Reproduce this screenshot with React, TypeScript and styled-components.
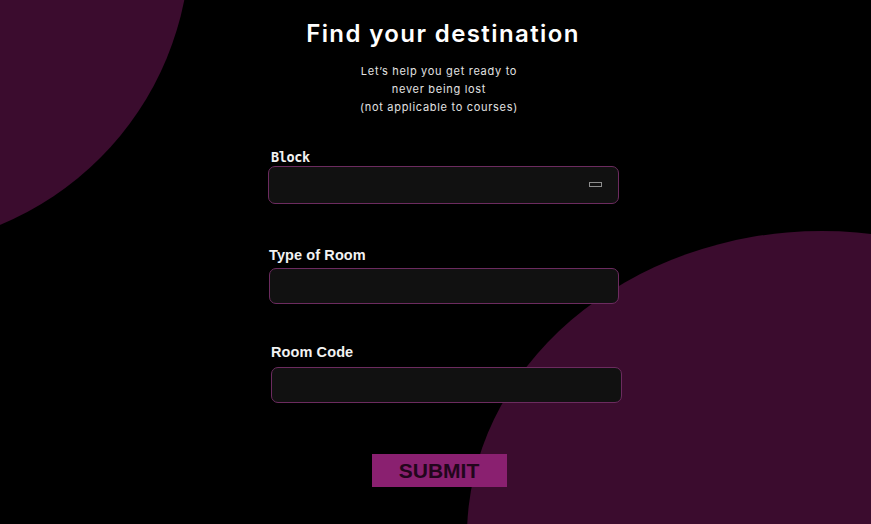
import React from "react";
import styled, { createGlobalStyle } from "styled-components";

const GlobalStyle = createGlobalStyle`
  html, body { margin: 0; padding: 0; background: #000; }
  body { font-family: "Inter", "Liberation Sans", sans-serif; }
  * { box-sizing: border-box; }
`;

const Page = styled.div`
  position: relative;
  width: 871px;
  height: 524px;
  overflow: hidden;
  background: #000;
`;

const Blob = styled.div<{ $left: number; $top: number; $w: number; $h: number }>`
  position: absolute;
  left: ${(p) => p.$left}px;
  top: ${(p) => p.$top}px;
  width: ${(p) => p.$w}px;
  height: ${(p) => p.$h}px;
  border-radius: 50%;
  background: #3b0c2e;
`;

const Main = styled.main`
  position: relative;
  z-index: 1;
  display: flex;
  flex-direction: column;
  align-items: center;
  padding-top: 18px;
  padding-left: 15px;
`;

const Title = styled.h1`
  margin: 0;
  font-family: "Inter", "Liberation Sans", sans-serif;
  font-weight: 600;
  font-size: 24px;
  line-height: 30px;
  letter-spacing: 1.4px;
  color: #fff;
  transform: translateY(1px);
`;

const Subtitle = styled.p`
  margin: 14px 0 0;
  font-family: "Inter", "Liberation Sans", sans-serif;
  font-size: 11px;
  line-height: 18px;
  letter-spacing: 0.7px;
  color: #e2e2e2;
  text-align: center;
  transform: translateX(-4px);
`;

const Form = styled.form`
  display: flex;
  flex-direction: column;
  align-items: flex-start;
  width: 352px;
  margin-top: 33px;
`;

const Field = styled.div<{ $dx: number; $top: number }>`
  display: flex;
  flex-direction: column;
  margin-left: ${(p) => p.$dx}px;
  margin-top: ${(p) => p.$top}px;
`;

const Label = styled.label<{ $mono?: boolean; $indent: number; $gap: number }>`
  display: block;
  margin: 0 0 ${(p) => p.$gap}px ${(p) => p.$indent}px;
  font-family: ${(p) =>
    p.$mono ? '"DejaVu Sans Mono", "Liberation Mono", monospace' : '"Liberation Sans", Arial, sans-serif'};
  font-weight: 700;
  font-size: ${(p) => (p.$mono ? 13.5 : 14.5)}px;
  line-height: 16px;
  letter-spacing: ${(p) => (p.$mono ? -0.4 : 0.1)}px;
  color: #f2f2f2;
`;

const Box = styled.div<{ $w: number; $h: number }>`
  display: flex;
  align-items: center;
  justify-content: flex-end;
  width: ${(p) => p.$w}px;
  height: ${(p) => p.$h}px;
  padding-right: 16px;
  background: #111111;
  border: 1px solid #6c2b5f;
  border-radius: 7px;
`;

const SelectGlyph = styled.span`
  display: block;
  width: 13px;
  height: 5px;
  border: 1px solid #8d8d8d;
  margin-top: -1px;
`;

const Submit = styled.button`
  align-self: center;
  margin: 51px 0 0 -8px;
  width: 135px;
  height: 33px;
  padding: 0;
  border: none;
  border-radius: 0;
  background: #8a2070;
  color: #22061c;
  font-family: "Liberation Sans", Arial, sans-serif;
  font-weight: 700;
  font-size: 21px;
  line-height: 33px;
  cursor: pointer;
`;

export default function App() {
  return (
    <>
      <GlobalStyle />
      <Page>
        <Blob $left={-424} $top={-366} $w={614} $h={614} />
        <Blob $left={467} $top={231} $w={710} $h={610} />
        <Main>
          <Title>Find your destination</Title>
          <Subtitle>
            Let’s help you get ready to
            <br />
            never being lost
            <br />
            (not applicable to courses)
          </Subtitle>
          <Form onSubmit={(e) => e.preventDefault()}>
            <Field $dx={1} $top={0}>
              <Label $mono $indent={3} $gap={1}>Block</Label>
              <Box $w={351} $h={38}>
                <SelectGlyph />
              </Box>
            </Field>
            <Field $dx={2} $top={43}>
              <Label $indent={0} $gap={5}>Type of Room</Label>
              <Box $w={350} $h={36} />
            </Field>
            <Field $dx={4} $top={40}>
              <Label $indent={0} $gap={7}>Room Code</Label>
              <Box $w={351} $h={36} />
            </Field>
            <Submit type="submit">SUBMIT</Submit>
          </Form>
        </Main>
      </Page>
    </>
  );
}
